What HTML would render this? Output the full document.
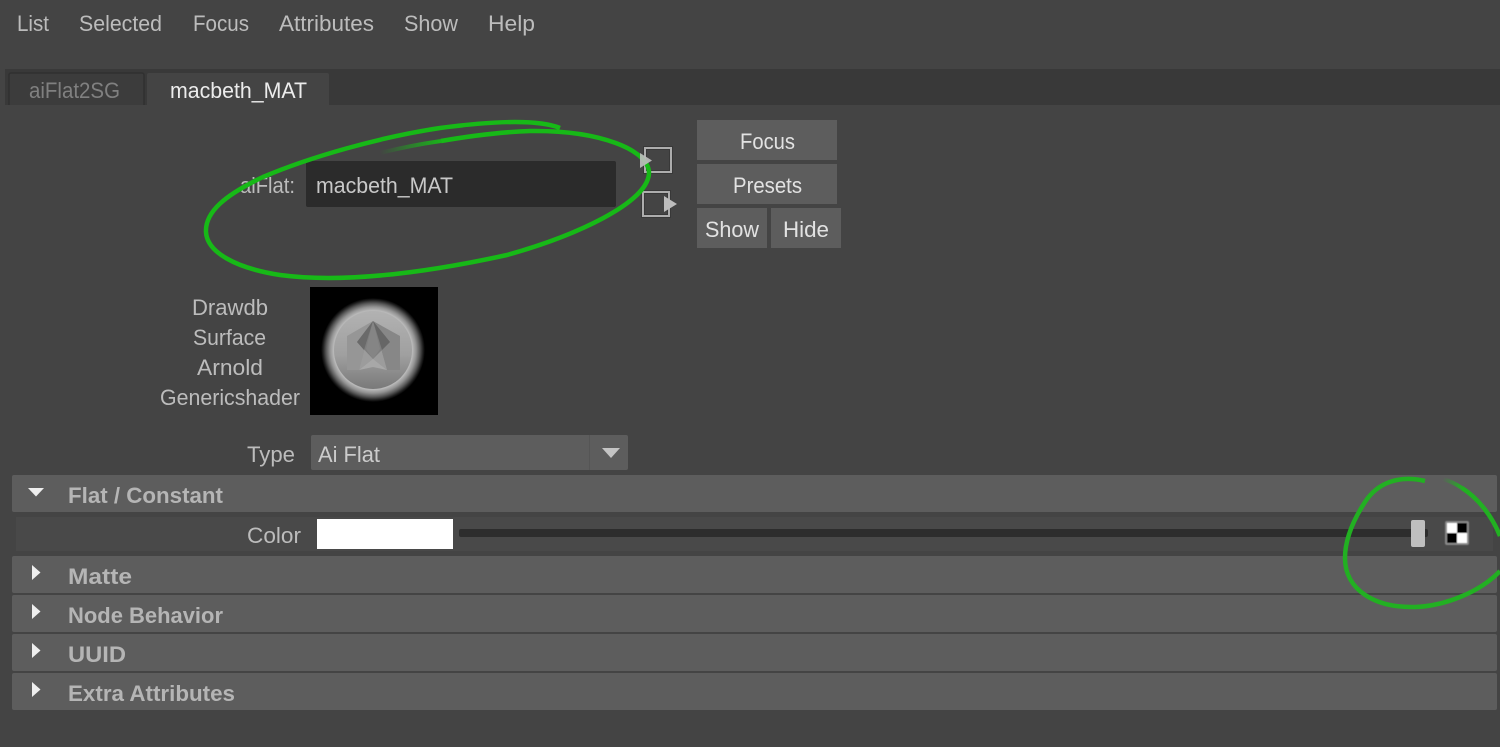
<!DOCTYPE html>
<html>
<head>
<meta charset="utf-8">
<style>
html,body{margin:0;padding:0;background:#444444;width:1500px;height:747px;overflow:hidden}
svg{display:block}
text{font-family:"Liberation Sans",sans-serif;font-size:22px;fill:#bcbcbc}
.b{font-weight:bold;fill:#b5b5b5}
.w{fill:#e2e2e2}
</style>
</head>
<body>
<svg width="1500" height="747" viewBox="0 0 1500 747" xmlns="http://www.w3.org/2000/svg">
<defs>
<radialGradient id="glow" gradientUnits="userSpaceOnUse" cx="373" cy="350" r="52">
<stop offset="0.76" stop-color="#b8b8b8"/>
<stop offset="0.83" stop-color="#929292"/>
<stop offset="0.90" stop-color="#5a5a5a"/>
<stop offset="0.96" stop-color="#202020"/>
<stop offset="1" stop-color="#000"/>
</radialGradient>
<linearGradient id="disc" gradientUnits="userSpaceOnUse" x1="373" y1="311" x2="373" y2="390">
<stop offset="0" stop-color="#b2b2b2"/>
<stop offset="0.55" stop-color="#a0a0a0"/>
<stop offset="1" stop-color="#787878"/>
</linearGradient>
<linearGradient id="tail" gradientUnits="userSpaceOnUse" x1="380" y1="153" x2="445" y2="140">
<stop offset="0" stop-color="#17b917" stop-opacity="0"/>
<stop offset="1" stop-color="#17b917"/>
</linearGradient>
<linearGradient id="tail2" gradientUnits="userSpaceOnUse" x1="1443" y1="479" x2="1462" y2="488">
<stop offset="0" stop-color="#22b022" stop-opacity="0"/>
<stop offset="1" stop-color="#22b022"/>
</linearGradient>
<filter id="soft" x="-20%" y="-20%" width="140%" height="140%"><feGaussianBlur stdDeviation="0.5"/></filter>
</defs>

<rect width="1500" height="747" fill="#444444"/>

<!-- menu -->
<text x="17" y="31" textLength="32" lengthAdjust="spacingAndGlyphs">List</text>
<text x="79" y="31" textLength="83" lengthAdjust="spacingAndGlyphs">Selected</text>
<text x="193" y="31" textLength="56" lengthAdjust="spacingAndGlyphs">Focus</text>
<text x="279" y="31" textLength="95" lengthAdjust="spacingAndGlyphs">Attributes</text>
<text x="404" y="31" textLength="54" lengthAdjust="spacingAndGlyphs">Show</text>
<text x="488" y="31" textLength="47" lengthAdjust="spacingAndGlyphs">Help</text>

<!-- tab bar -->
<rect x="5" y="69" width="1495" height="36" fill="#393939"/>
<path d="M9 105V75a2 2 0 0 1 2-2H142a2 2 0 0 1 2 2V105" fill="#3c3c3c" stroke="#303030" stroke-width="1.5"/>
<path d="M147 105V75a2 2 0 0 1 2-2H327a2 2 0 0 1 2 2V105Z" fill="#444444"/>
<text x="29" y="98" textLength="91" lengthAdjust="spacingAndGlyphs" style="fill:#808080">aiFlat2SG</text>
<text x="170" y="98" textLength="137" lengthAdjust="spacingAndGlyphs" style="fill:#ececec">macbeth_MAT</text>

<!-- name row -->
<text x="240" y="193" textLength="55" lengthAdjust="spacingAndGlyphs">aiFlat:</text>
<rect x="306" y="161" width="310" height="46" rx="2" fill="#2b2b2b"/>
<text x="316" y="193" textLength="137" lengthAdjust="spacingAndGlyphs" style="fill:#c8c8c8">macbeth_MAT</text>

<!-- connectors -->
<rect x="645" y="148" width="26" height="24" fill="none" stroke="#383838" stroke-width="4"/>
<rect x="645" y="148" width="26" height="24" fill="none" stroke="#adadad" stroke-width="2"/>
<rect x="643" y="192" width="26" height="24" fill="none" stroke="#383838" stroke-width="4"/>
<rect x="643" y="192" width="26" height="24" fill="none" stroke="#adadad" stroke-width="2"/>
<path d="M664 196L677 204L664 212Z" fill="#bdbdbd"/>

<!-- buttons -->
<rect x="697" y="120" width="140" height="40" fill="#5d5d5d"/>
<rect x="697" y="164" width="140" height="40" fill="#5d5d5d"/>
<rect x="697" y="208" width="70" height="40" fill="#5d5d5d"/>
<rect x="771" y="208" width="70" height="40" fill="#5d5d5d"/>
<text x="740" y="149" textLength="55" lengthAdjust="spacingAndGlyphs" class="w">Focus</text>
<text x="733" y="193" textLength="69" lengthAdjust="spacingAndGlyphs" class="w">Presets</text>
<text x="705" y="237" textLength="54" lengthAdjust="spacingAndGlyphs" class="w">Show</text>
<text x="783" y="237" textLength="46" lengthAdjust="spacingAndGlyphs" class="w">Hide</text>

<!-- green ellipse 1 -->
<path d="M560 128C540 120 500 120 440 128C380 137 310 157 263 177C225 195 205 212 206 232C207 252 235 268 280 275C340 283 420 274 507 255C575 236 648 203 649 173C649 150 600 130 530 131C500 132 470 136 441 141" fill="none" stroke="#17b917" stroke-width="4.500"/>
<path d="M441 141C420 144 400 148 380 153" fill="none" stroke="url(#tail)" stroke-width="4"/>
<path d="M640 153L652 160.500L640 168Z" fill="#bdbdbd" fill-opacity=".92"/>

<!-- labels & swatch -->
<text x="192" y="315" textLength="76" lengthAdjust="spacingAndGlyphs">Drawdb</text>
<text x="193" y="345" textLength="73" lengthAdjust="spacingAndGlyphs">Surface</text>
<text x="197" y="375" textLength="66" lengthAdjust="spacingAndGlyphs">Arnold</text>
<text x="160" y="405" textLength="140" lengthAdjust="spacingAndGlyphs">Genericshader</text>

<rect x="310" y="287" width="128" height="128" fill="#000"/>
<circle cx="373" cy="350" r="52" fill="url(#glow)"/>
<circle cx="373" cy="350" r="40" fill="#b8b8b8"/>
<circle cx="373" cy="350" r="39" fill="url(#disc)"/>
<!-- logo -->
<path d="M347 336L373 321L359 370H347Z" fill="#969696"/>
<path d="M400 336L373 321L387 370H400Z" fill="#878787"/>
<path d="M373 321L359 370L373 359L387 370Z" fill="#9c9c9c"/>
<path d="M359 370L373 359L387 370L373 367Z" fill="#a8a8a8"/>
<path d="M373 321L390 342L373 359L357 342Z" fill="#7e7e7e"/>
<path d="M373 321L357 342L364 350Z" fill="#6a6a6a"/>
<path d="M373 321L390 342L382 350Z" fill="#666666"/>
<path d="M373 321L366 349L373 359L380 349Z" fill="#858585"/>

<!-- type -->
<text x="247" y="462" textLength="48" lengthAdjust="spacingAndGlyphs">Type</text>
<rect x="311" y="435" width="317" height="35" rx="2" fill="#5d5d5d"/>
<rect x="589" y="435" width="1" height="35" fill="#555555"/>
<text x="318" y="462" textLength="62" lengthAdjust="spacingAndGlyphs" style="fill:#cccccc">Ai Flat</text>
<path d="M602 448H620L611 458Z" fill="#c4c4c4"/>

<!-- sections -->
<rect x="12" y="475" width="1485" height="37" rx="2" fill="#5d5d5d"/>
<rect x="16" y="517" width="1477" height="34" fill="#494949"/>
<rect x="12" y="556" width="1485" height="37" rx="2" fill="#5d5d5d"/>
<rect x="12" y="595" width="1485" height="37" rx="2" fill="#5d5d5d"/>
<rect x="12" y="634" width="1485" height="37" rx="2" fill="#5d5d5d"/>
<rect x="12" y="673" width="1485" height="37" rx="2" fill="#5d5d5d"/>

<path d="M28 488H44L36 496.500Z" fill="#eeeeee"/>
<path d="M32 565L40.500 572.500L32 580Z" fill="#eeeeee"/>
<path d="M32 604L40.500 611.500L32 619Z" fill="#eeeeee"/>
<path d="M32 643L40.500 650.500L32 658Z" fill="#eeeeee"/>
<path d="M32 682L40.500 689.500L32 697Z" fill="#eeeeee"/>

<text x="68" y="503" textLength="155" lengthAdjust="spacingAndGlyphs" class="b">Flat / Constant</text>
<text x="68" y="584" textLength="64" lengthAdjust="spacingAndGlyphs" class="b">Matte</text>
<text x="68" y="623" textLength="155" lengthAdjust="spacingAndGlyphs" class="b">Node Behavior</text>
<text x="68" y="662" textLength="58" lengthAdjust="spacingAndGlyphs" class="b">UUID</text>
<text x="68" y="701" textLength="167" lengthAdjust="spacingAndGlyphs" class="b">Extra Attributes</text>

<!-- color row -->
<text x="247" y="543" textLength="54" lengthAdjust="spacingAndGlyphs">Color</text>
<rect x="317" y="519" width="136" height="30" fill="#ffffff"/>
<rect x="459" y="529" width="969" height="8" rx="2" fill="#2d2d2d"/>
<rect x="1411" y="520" width="14" height="27" rx="2" fill="#bfbfbf"/>
<g filter="url(#soft)">
<rect x="1445" y="521" width="24" height="24" rx="2" fill="#8a8a8a"/>
<rect x="1447" y="523" width="10" height="10" fill="#ffffff"/>
<rect x="1457" y="523" width="10" height="10" fill="#000000"/>
<rect x="1447" y="533" width="10" height="10" fill="#000000"/>
<rect x="1457" y="533" width="10" height="10" fill="#ffffff"/>
</g>

<!-- green circle 2 -->
<path d="M1425 481C1400 475 1378 482 1365 502C1352 522 1345 540 1345 558C1345 590 1375 608 1415 607C1445 606 1480 592 1500 571" fill="none" stroke="#22b022" stroke-width="4.500"/>
<path d="M1462 488C1478 498 1492 516 1500 536" fill="none" stroke="#22b022" stroke-width="4.500"/>
<path d="M1443 479C1450 481 1456 484 1462 488" fill="none" stroke="url(#tail2)" stroke-width="4"/>
</svg>
</body>
</html>
